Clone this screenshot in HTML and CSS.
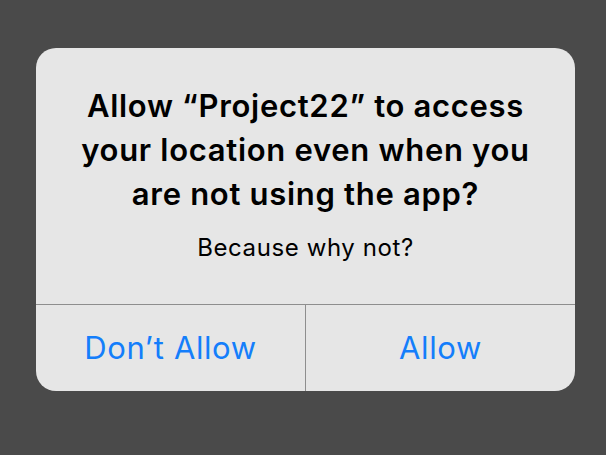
FILE: index.html
```html
<!DOCTYPE html>
<html>
<head>
  <link rel="stylesheet" href="styles.css">
</head>
<body>
  <div class="alert">
    <div class="alert-body">
      <h1 class="alert-title">Allow “Project22” to access your location even when you are not using the app?</h1>
      <p class="alert-message">Because why not?</p>
    </div>
    <div class="alert-actions">
      <button class="alert-btn">Don’t Allow</button>
      <button class="alert-btn">Allow</button>
    </div>
  </div>
</body>
</html>
```

FILE: styles.css
```css
body {
  background-color: #4a4a4a;
  margin: 0;
  padding: 48px 0 0 36px;
  height: 455px;
  box-sizing: border-box;
  font-family: Inter, "Noto Sans", sans-serif;
}

.alert {
  width: 539px;
  height: 343px;
  background-color: #e6e6e6;
  border-radius: 20px;
  overflow: hidden;
  display: flex;
  flex-direction: column;
}

.alert-body {
  height: 256px;
  box-sizing: border-box;
  padding: 36px 30px 0 30px;
  text-align: center;
}

.alert-title {
  margin: 0;
  font-size: 31px;
  font-weight: 600;
  line-height: 44px;
  letter-spacing: 0.7px;
  color: #000;
}

.alert-message {
  margin: 17px 0 0 0;
  font-size: 24px;
  line-height: 30px;
  letter-spacing: 0.6px;
  color: #000;
}

.alert-actions {
  flex: 1;
  display: flex;
  border-top: 1px solid #8e8e8e;
}

.alert-btn {
  flex: 1;
  background: none;
  border: none;
  margin: 0;
  padding: 0 0 2px 0;
  font-family: inherit;
  font-size: 31px;
  letter-spacing: 0.6px;
  color: #147efb;
}

.alert-btn + .alert-btn {
  border-left: 1px solid #8e8e8e;
}
```
